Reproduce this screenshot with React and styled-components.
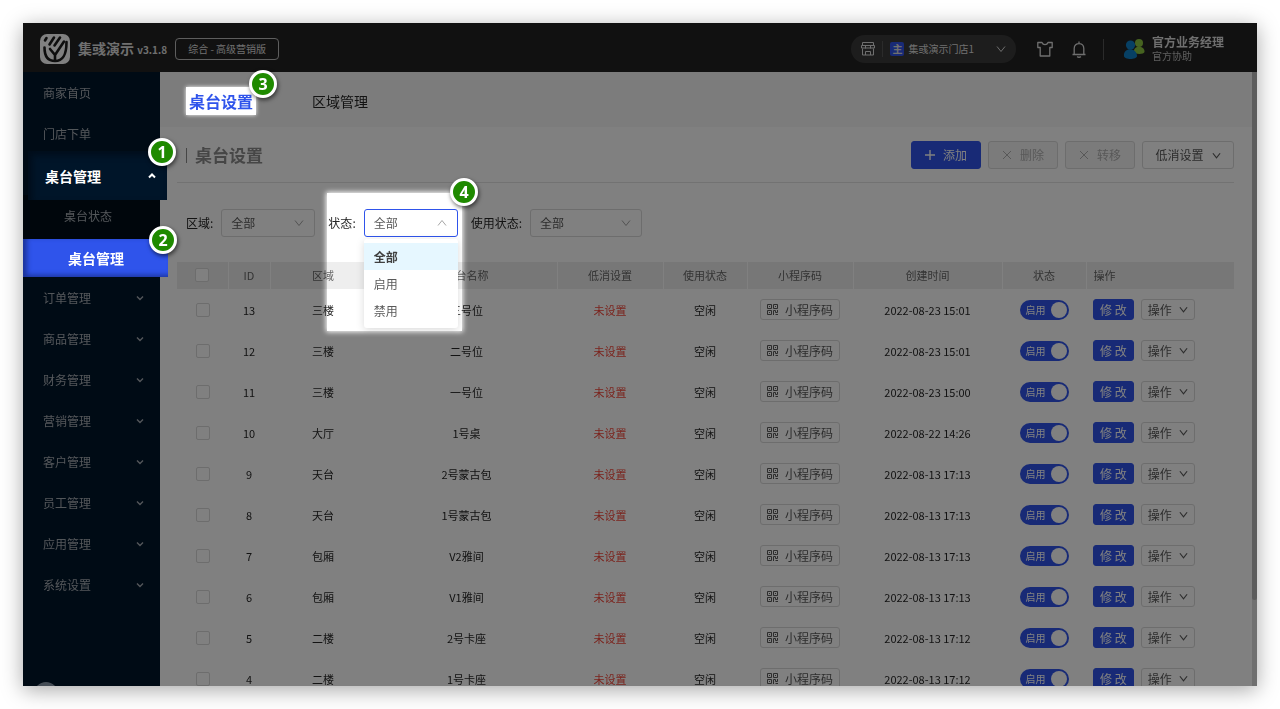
import React, { useState } from 'react'
import styled, { createGlobalStyle, css } from 'styled-components'

const menuTop = ['商家首页', '门店下单']
const menuBottom = ['订单管理', '商品管理', '财务管理', '营销管理', '客户管理', '员工管理', '应用管理', '系统设置']

const tables = [
    { id: 13, area: '三楼', name: '三号位', time: '2022-08-23 15:01' },
    { id: 12, area: '三楼', name: '二号位', time: '2022-08-23 15:01' },
    { id: 11, area: '三楼', name: '一号位', time: '2022-08-23 15:00' },
    { id: 10, area: '大厅', name: '1号桌', time: '2022-08-22 14:26' },
    { id: 9, area: '天台', name: '2号蒙古包', time: '2022-08-13 17:13' },
    { id: 8, area: '天台', name: '1号蒙古包', time: '2022-08-13 17:13' },
    { id: 7, area: '包厢', name: 'V2雅间', time: '2022-08-13 17:13' },
    { id: 6, area: '包厢', name: 'V1雅间', time: '2022-08-13 17:13' },
    { id: 5, area: '二楼', name: '2号卡座', time: '2022-08-13 17:12' },
    { id: 4, area: '二楼', name: '1号卡座', time: '2022-08-13 17:12' }
]

const columns = [
    { title: 'ID', width: 42 },
    { title: '区域', width: 106 },
    { title: '桌台名称', width: 181 },
    { title: '低消设置', width: 106 },
    { title: '使用状态', width: 84 },
    { title: '小程序码', width: 106 },
    { title: '创建时间', width: 149 },
    { title: '状态', width: 84 },
    { title: '操作', width: 148, left: true }
]

const Chevron = ({ size = 10, up = false, weight = 1 }) => (
    <svg width={size} height={size} viewBox="0 0 10 10" fill="none" stroke="currentColor" strokeWidth={weight} aria-hidden="true">
        <path d={up ? 'M1 7.5L5 2.5L9 7.5' : 'M1 2.5L5 7.5L9 2.5'} />
    </svg>
)

const MenuArrow = ({ up = false }) => (
    <svg width="8" height="8" viewBox="0 0 8 8" fill="none" stroke="currentColor" strokeWidth={up ? 2 : 1.4} aria-hidden="true">
        <path d={up ? 'M1 5.5L4 2.5L7 5.5' : 'M1 2.5L4 5.5L7 2.5'} />
    </svg>
)

const Cross = () => (
    <svg width="10" height="10" viewBox="0 0 10 10" stroke="currentColor" aria-hidden="true">
        <path d="M1 1L9 9M9 1L1 9" />
    </svg>
)

const Plus = () => (
    <svg width="10" height="10" viewBox="0 0 10 10" stroke="currentColor" strokeWidth="1.4" aria-hidden="true">
        <path d="M5 0V10M0 5H10" />
    </svg>
)

const QrIcon = () => (
    <svg width="11" height="11" viewBox="0 0 11 11" fill="none" stroke="currentColor" aria-hidden="true">
        <path d="M0.5 0.5h4v4h-4zM6.5 0.5h4v4h-4zM0.5 6.5h4v4h-4zM6.5 11v-4.5h2v2h2v-2.5M8.5 10.5h2.5M2 2.5h1M8 2.5h1M2 8.5h1" />
    </svg>
)

const Logo = () => (
    <svg width="30" height="30" viewBox="0 0 30 30" aria-hidden="true">
        <rect width="30" height="30" rx="7" fill="#fff" />
        <g fill="none" stroke="#1c1c1c" strokeWidth="2.6" strokeLinecap="round">
            <path d="M4.5 13.5C4.500 22 8 27 15 27C22.500 27 26.500 22 26.500 8" />
            <path d="M5 6.500L6.500 4M9.500 10.500L14 3.500M14.500 11.500L20 3.500" />
            <path d="M10 15L15 21V26.500M15 21L24 7.500" />
        </g>
    </svg>
)

const ShopIcon = () => (
    <svg width="14" height="14" viewBox="0 0 14 14" fill="none" stroke="currentColor" aria-hidden="true">
        <path d="M1.5 0.5h11v3h-11zM0.5 3.5h13v2.5h-13zM4.500 3.500v3M9.500 3.500v3M1.5 6.500v6.500h11v-6.500M4.500 13v-3.500h5v3.500" />
    </svg>
)

const ShirtIcon = () => (
    <svg width="16" height="16" viewBox="0 0 16 16" fill="none" stroke="currentColor" strokeWidth="1.3" strokeLinejoin="round" aria-hidden="true">
        <path d="M5 1.5C6 4.3 10 4.3 11 1.5L15.2 1.5V6.500H12.800V15H3.200V6.500H0.800V1.500Z" />
    </svg>
)

const BellIcon = () => (
    <svg width="14" height="17" viewBox="0 0 14 17" fill="none" stroke="currentColor" strokeWidth="1.3" aria-hidden="true">
        <path d="M0.5 13.5H13.5M2.200 13.500V7.500C2.200 1 11.800 1 11.800 7.500V13.500M7 0.500V2.500M5.200 15.500C6 16.500 8 16.500 8.800 15.500" />
    </svg>
)

const PeopleIcon = () => (
    <svg width="22" height="22" viewBox="0 0 22 22" aria-hidden="true">
        <circle cx="16" cy="5" r="4" fill="#8cc63f" />
        <path d="M11 14C10 7 22 7 21.5 14C21 16.5 12 16.5 11 14Z" fill="#8cc63f" />
        <circle cx="7.5" cy="7" r="4.6" fill="#0d7fc8" />
        <path d="M1 18C0 9 14 9 14 18C14 22 1 22 1 18Z" fill="#0d7fc8" />
    </svg>
)

const Filter = ({ id, label, wide, open, children }) => (
    <FilterGroup>
        <label htmlFor={id}>{label}:</label>
        <SelectBox $wide={wide} $open={open}>
            <select id={id}>
                <option>全部</option>
                <option>启用</option>
                <option>禁用</option>
            </select>
            <Chevron up={open} />
            {children}
        </SelectBox>
    </FilterGroup>
)

const TableRow = ({ row }) => {
    const [on, setOn] = useState(true)
    return (
        <tr>
            <td><CheckBox type="checkbox" aria-label={row.name} /></td>
            <td>{row.id}</td>
            <td>{row.area}</td>
            <td>{row.name}</td>
            <td><Unset>未设置</Unset></td>
            <td>空闲</td>
            <td><SmallButton><QrIcon />小程序码</SmallButton></td>
            <td>{row.time}</td>
            <td>
                <Switch $on={on}>
                    <input type="checkbox" role="switch" checked={on} onChange={() => setOn(!on)} />
                    启用
                    <i />
                </Switch>
            </td>
            <td>
                <Actions>
                    <SmallButton $primary>修 改</SmallButton>
                    <SmallButton>操作<Chevron size={9} weight={1.3} /></SmallButton>
                </Actions>
            </td>
        </tr>
    )
}

export default function App() {
    return (
        <>
            <GlobalStyle />
            <Stage>
                <Window>
                    <Header>
                        <Logo />
                        <Brand>集彧演示 <small>v3.1.8</small></Brand>
                        <Edition>综合 - 高级营销版</Edition>
                        <StorePicker>
                            <ShopIcon />
                            <Line />
                            <Tag>主</Tag>
                            <span>集彧演示门店1</span>
                            <Chevron />
                        </StorePicker>
                        <IconButton aria-label="主题"><ShirtIcon /></IconButton>
                        <IconButton aria-label="通知"><BellIcon /></IconButton>
                        <Line $tall />
                        <User>
                            <PeopleIcon />
                            <div>
                                <strong>官方业务经理</strong>
                                <span>官方协助</span>
                            </div>
                        </User>
                    </Header>
                    <Body>
                        <Sidebar>
                            {menuTop.map(item => <MenuItem key={item} href="#">{item}</MenuItem>)}
                            <Slot>
                                <LiftedItem href="#">
                                    桌台管理<MenuArrow up />
                                    <Badge>1</Badge>
                                </LiftedItem>
                            </Slot>
                            <SubMenu>
                                <MenuItem href="#" $sub>桌台状态</MenuItem>
                                <Slot>
                                    <LiftedItem href="#" $active>
                                        桌台管理
                                        <Badge>2</Badge>
                                    </LiftedItem>
                                </Slot>
                            </SubMenu>
                            {menuBottom.map(item => <MenuItem key={item} href="#">{item}<MenuArrow /></MenuItem>)}
                            <HelpDot aria-label="帮助" />
                        </Sidebar>
                        <Main>
                            <Tabs>
                                <LiftedTab href="#">桌台设置<Badge $tab>3</Badge></LiftedTab>
                                <Tab href="#">区域管理</Tab>
                            </Tabs>
                            <Content>
                                <TitleRow>
                                    <h1>桌台设置</h1>
                                    <Button $primary><Plus />添加</Button>
                                    <Button disabled><Cross />删除</Button>
                                    <Button disabled><Cross />转移</Button>
                                    <Button $menu>低消设置<Chevron size={9} weight={1.3} /></Button>
                                </TitleRow>
                                <Filters>
                                    <Filter id="area" label="区域" />
                                    <Filter id="status" label="状态" open>
                                        <Options role="listbox">
                                            <li role="option" aria-selected="true">全部</li>
                                            <li role="option" aria-selected="false">启用</li>
                                            <li role="option" aria-selected="false">禁用</li>
                                        </Options>
                                    </Filter>
                                    <Filter id="usage" label="使用状态" wide />
                                </Filters>
                                <Table>
                                    <colgroup>
                                        <Col $width={51} />
                                        {columns.map(c => <Col key={c.title} $width={c.width} />)}
                                    </colgroup>
                                    <thead>
                                        <tr>
                                            <th><CheckBox type="checkbox" aria-label="全选" /></th>
                                            {columns.map(c => <Th key={c.title} $left={c.left}>{c.title}</Th>)}
                                        </tr>
                                    </thead>
                                    <tbody>
                                        {tables.map(row => <TableRow key={row.id} row={row} />)}
                                    </tbody>
                                </Table>
                            </Content>
                        </Main>
                        <ScrollTrack><ScrollThumb /></ScrollTrack>
                    </Body>
                    <Shade><Spotlight /></Shade>
                    <FilterBadge>4</FilterBadge>
                </Window>
            </Stage>
        </>
    )
}

const GlobalStyle = createGlobalStyle`
*{
    box-sizing: border-box;
}
body{
    margin: 0;
    background: #fff;
    font-family: "Noto Sans CJK SC", "Noto Sans", sans-serif;
    font-size: 12px;
    line-height: 18px;
    color: #262626;
}
button, select, input{
    font: inherit;
    color: inherit;
    margin: 0;
}
a{
    text-decoration: none;
}
svg{
    flex: none;
}
`

const Stage = styled.div`
height: 100vh;
padding: 23px;
overflow: hidden;
`

const Window = styled.div`
position: relative;
isolation: isolate;
display: flex;
flex-direction: column;
height: 100%;
overflow: hidden;
background: #fff;
box-shadow: 0 4px 20px rgba(0,0,0,0.35);
`

const Header = styled.header`
display: flex;
align-items: center;
flex: none;
height: 49px;
padding: 3px 33px 0 17px;
background: #222;
color: #ddd;
`

const Brand = styled.div`
margin: 0 8px;
font-size: 14px;
font-weight: 700;
white-space: nowrap;
small{
    font-size: 10px;
}
`

const Edition = styled.span`
padding: 0 12px;
border: 1px solid #bbb;
border-radius: 4px;
font-size: 10px;
line-height: 20px;
`

const StorePicker = styled.button`
display: flex;
align-items: center;
height: 28px;
margin-left: auto;
margin-right: 12px;
padding: 0 10px;
border: 0;
border-radius: 14px;
background: #3a3a3a;
font-size: 10px;
span{
    margin-right: 22px;
}
`

const Line = styled.i`
width: 1px;
height: ${props => props.$tall ? 21 : 16}px;
margin: 0 7px;
background: #555;
`

const Tag = styled.b`
width: 14px;
height: 14px;
margin-right: 4px;
border-radius: 2px;
background: #2f54eb;
font-size: 10px;
line-height: 14px;
`

const IconButton = styled.button`
display: flex;
align-items: center;
justify-content: center;
width: 34px;
height: 28px;
padding: 0;
border: 0;
background: none;
`

const User = styled.div`
display: flex;
align-items: center;
gap: 7px;
margin-left: 12px;
strong, span{
    display: block;
    line-height: 14px;
}
span{
    font-size: 10px;
    color: #bbb;
}
`

const Body = styled.div`
display: flex;
flex: 1;
min-height: 0;
`

const Sidebar = styled.nav`
display: flex;
flex-direction: column;
flex: none;
width: 137px;
background: #001529;
`

const MenuItem = styled.a`
display: flex;
align-items: center;
justify-content: space-between;
flex: none;
height: 41px;
padding: 0 16px 0 ${props => props.$sub ? 41 : 20}px;
color: #a6adb4;
`

const SubMenu = styled.div`
background: #000c17;
`

const Slot = styled.div`
display: flex;
align-items: center;
flex: none;
height: 41px;
`

// lifted parts sit above the shade
const lifted = css`
position: relative;
z-index: 3;
`

const LiftedItem = styled.a`
${lifted}
display: flex;
align-items: center;
justify-content: space-between;
flex: none;
width: 139px;
height: 49px;
margin: 1px 0 0 5px;
padding: 2px 11px 0 17px;
background: #001529;
box-shadow: inset 4px 4px 6px #000d1a;
color: #fff;
font-size: 14px;
font-weight: 700;
${props => props.$active && css`
    width: 145px;
    height: 38px;
    margin: 2px 0 0;
    padding: 0 0 0 45px;
    background: #2f54eb;
    box-shadow: inset 4px -2px 5px #1c349a;
`}
`

const Badge = styled.b`
position: absolute;
top: ${props => props.$tab ? -17 : -13}px;
right: ${props => props.$tab ? -21 : -9}px;
display: flex;
align-items: center;
justify-content: center;
width: 28px;
height: 28px;
border: 3px solid #fff;
border-radius: 50%;
background: #1f8a00;
box-shadow: 1px 2px 4px rgba(0,0,0,0.6);
color: #fff;
font: 700 16px/22px "Open Sans", sans-serif;
`

const FilterBadge = styled(Badge)`
z-index: 3;
top: 155px;
left: 427px;
`

const HelpDot = styled.button`
flex: none;
width: 24px;
height: 24px;
margin: auto 0 -20px 11px;
padding: 0;
border: 0;
border-radius: 50%;
background: #8a9aab;
`

const Main = styled.main`
flex: 1;
min-width: 0;
`

const Tabs = styled.div`
display: flex;
align-items: center;
height: 55px;
padding: 3px 26px 0;
background: #f8f8f8;
`

const Tab = styled.a`
color: #262626;
font-size: 14px;
`

const LiftedTab = styled.a`
${lifted}
margin-right: 56px;
padding: 0 3px;
background: #fff;
box-shadow: 0 0 4px #fff;
color: #2f54eb;
font-size: 16px;
font-weight: 700;
line-height: 28px;
`

const Content = styled.div`
padding: 0 18px 0 17px;
`

const TitleRow = styled.div`
display: flex;
align-items: center;
gap: 7px;
height: 56px;
padding-top: 1px;
border-bottom: 1px solid #e4e4e4;
h1{
    display: flex;
    align-items: center;
    gap: 8px;
    flex: 1;
    margin: 0;
    padding-left: 9px;
    color: #8c8c8c;
    font-size: 17px;
    font-weight: 700;
}
h1::before{
    content: '';
    width: 1px;
    height: 15px;
    background: #8c8c8c;
}
`

const Button = styled.button`
display: flex;
align-items: center;
justify-content: center;
gap: 8px;
width: ${props => props.$menu ? 92 : 70}px;
height: 28px;
padding: 0;
border: 1px solid ${props => props.$primary ? '#2f54eb' : '#d9d9d9'};
border-radius: 3px;
background: ${props => props.$primary ? '#2f54eb' : '#fff'};
color: ${props => props.$primary ? '#fff' : '#595959'};
&:disabled{
    background: #f5f5f5;
    color: #b0b0b0;
}
`

const Filters = styled.div`
display: flex;
gap: 13px;
padding: 26px 9px 25px;
`

const FilterGroup = styled.div`
display: flex;
align-items: center;
gap: 8px;
`

const SelectBox = styled.div`
position: relative;
display: flex;
align-items: center;
width: ${props => props.$wide ? 112 : 94}px;
height: 28px;
padding-right: 10px;
border: 1px solid ${props => props.$open ? '#2f54eb' : '#d9d9d9'};
border-radius: 3px;
background: #fff;
color: #595959;
select{
    flex: 1;
    min-width: 0;
    height: 26px;
    padding: 0 0 0 9px;
    border: 0;
    outline: 0;
    background: none;
    appearance: none;
}
svg{
    color: #a6a6a6;
}
`

const Options = styled.ul`
position: absolute;
z-index: 1;
top: 29px;
left: -1px;
right: -1px;
margin: 0;
padding: 4px 0;
border-radius: 3px;
background: #fff;
box-shadow: 0 2px 8px rgba(0,0,0,0.15);
list-style: none;
li{
    padding: 0 10px;
    line-height: 27px;
}
li[aria-selected="true"]{
    background: #e6f7ff;
    color: #404040;
    font-weight: 700;
}
`

const Table = styled.table`
width: 100%;
table-layout: fixed;
border-collapse: collapse;
font-size: 11px;
text-align: center;
th, td{
    padding: 0;
    font-weight: 400;
    white-space: nowrap;
}
th{
    height: 27px;
    padding-bottom: 2px;
    background: #eee;
    color: #666;
}
td{
    height: 41px;
}
td:last-child{
    padding-left: 7px;
}
`

const Col = styled.col`
width: ${props => props.$width}px;
`

const Th = styled.th`
border-left: 1px solid #fff;
${props => props.$left && css`
    && {
        padding-left: 7px;
        text-align: left;
    }
`}
`

const CheckBox = styled.input`
appearance: none;
display: block;
width: 14px;
height: 14px;
&&{
    margin: 0 auto;
}
border: 1px solid #d9d9d9;
border-radius: 2px;
background: #fff;
`

const Unset = styled.span`
color: #f5483b;
`

const SmallButton = styled.button`
display: inline-flex;
align-items: center;
gap: 7px;
height: 21px;
padding: 0 6px;
border: 1px solid ${props => props.$primary ? '#2f54eb' : '#d9d9d9'};
border-radius: 3px;
background: ${props => props.$primary ? '#2f54eb' : '#fff'};
color: ${props => props.$primary ? '#fff' : '#595959'};
font-size: 12px;
vertical-align: middle;
`

const Actions = styled.div`
display: flex;
gap: 7px;
`

const Switch = styled.label`
display: inline-flex;
align-items: center;
justify-content: space-between;
width: 49px;
height: 20px;
padding: 0 2px 0 6px;
border-radius: 10px;
background: ${props => props.$on ? '#2f54eb' : '#bfbfbf'};
color: #fff;
font-size: 10px;
vertical-align: middle;
input{
    position: absolute;
    opacity: 0;
}
i{
    width: 16px;
    height: 16px;
    border-radius: 50%;
    background: #fff;
}
`

const ScrollTrack = styled.div`
flex: none;
width: 5px;
background: #dedede;
`

const ScrollThumb = styled.div`
height: 86%;
border-radius: 0 0 3px 3px;
background: #b8b8b8;
`

const Shade = styled.div`
position: absolute;
z-index: 2;
inset: 0;
background: #808080;
mix-blend-mode: multiply;
pointer-events: none;
`

const Spotlight = styled.div`
position: absolute;
top: 170px;
left: 304px;
width: 135px;
height: 138px;
background: #fff;
box-shadow: 0 0 5px 1px #fff;
`
